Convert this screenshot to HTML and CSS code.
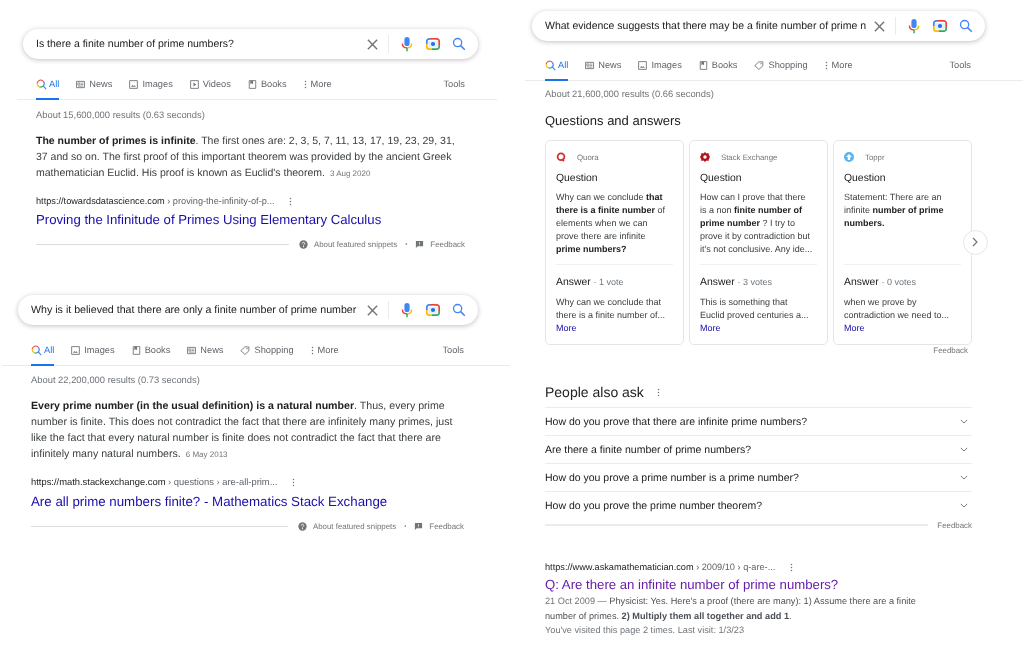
FILE: index.html
```html
<!DOCTYPE html>
<html lang="en">
<head>
    <meta charset="UTF-8">
    <meta name="viewport" content="width=device-width, initial-scale=1.0">
    <title>Prime number searches</title>
    <link rel="stylesheet" href="styles.css">
</head>
<body>
    <!-- shared icons -->
    <svg class="defs" width="0" height="0">
        <symbol id="i-close" viewBox="0 0 14 14"><path d="M2 2l10 10M12 2L2 12" fill="none" stroke="#70757a" stroke-width="1.5"/></symbol>
        <symbol id="i-mic" viewBox="0 0 14 16">
            <rect x="4.4" y="1" width="5.2" height="9" rx="2.6" fill="#4285f4"/>
            <path d="M2.4 7.6c0 2.6 2 4.3 4.6 4.3" fill="none" stroke="#ea4335" stroke-width="1.4"/>
            <path d="M11.6 7.6c0 2.6-2 4.3-4.6 4.3" fill="none" stroke="#fbbc04" stroke-width="1.4"/>
            <path d="M7 11.7V15.2" stroke="#34a853" stroke-width="1.5"/>
        </symbol>
        <symbol id="i-lens" viewBox="0 0 16 16">
            <path d="M1.8 8V5.2a2.4 2.4 0 0 1 2.4-2.4h1.6" fill="none" stroke="#4285f4" stroke-width="1.7"/>
            <path d="M5.4 2.8h5.4" fill="none" stroke="#ea4335" stroke-width="1.7"/>
            <path d="M10.4 2.8h1.4a2.4 2.4 0 0 1 2.4 2.4V9" fill="none" stroke="#ea4335" stroke-width="1.7"/>
            <path d="M1.8 8v2.8a2.4 2.4 0 0 0 2.4 2.4H7" fill="none" stroke="#fbbc04" stroke-width="1.7"/>
            <path d="M7 13.2h4.8a2.4 2.4 0 0 0 2.4-2.4V9" fill="none" stroke="#34a853" stroke-width="1.7"/>
            <path d="M3 5h10v6.8H3z" fill="#d2e3fc" opacity=".55"/>
            <circle cx="8" cy="8" r="2.1" fill="#1a73e8"/>
        </symbol>
        <symbol id="i-search" viewBox="0 0 14 14"><circle cx="5.6" cy="5.6" r="4.1" fill="none" stroke="#4285f4" stroke-width="1.3"/><path d="M8.6 8.6l4.2 4.2" stroke="#4285f4" stroke-width="1.5"/></symbol>
        <symbol id="i-all" viewBox="0 0 12 12">
            <path d="M1.2 5a3.8 3.8 0 0 1 1.6-3" fill="none" stroke="#ea4335" stroke-width="1.2"/>
            <path d="M2.8 2A3.8 3.8 0 0 1 8 2.6" fill="none" stroke="#ea4335" stroke-width="1.2"/>
            <path d="M1.2 5a3.8 3.8 0 0 0 2.4 3.4" fill="none" stroke="#fbbc04" stroke-width="1.2"/>
            <path d="M3.6 8.4A3.8 3.8 0 0 0 8 7.6" fill="none" stroke="#34a853" stroke-width="1.2"/>
            <path d="M8 2.6a3.8 3.8 0 0 1 0 5l3 3.4" fill="none" stroke="#4285f4" stroke-width="1.2"/>
        </symbol>
        <symbol id="i-news" viewBox="0 0 10 10"><path d="M.5 1.5h9v7h-9z" fill="none" stroke="#70757a"/><path d="M2 3.2h2.4v2.2H2zM5.4 3.4h2.8M5.4 5h2.8M2 6.8h6.2" fill="none" stroke="#70757a" stroke-width=".8"/></symbol>
        <symbol id="i-image" viewBox="0 0 10 10"><path d="M.7.7h8.6v8.6H.7z" fill="none" stroke="#70757a"/><path d="M2.2 7.6l1.6-2 1.2 1.2 1-.9 1.8 1.7z" fill="#70757a"/></symbol>
        <symbol id="i-video" viewBox="0 0 10 10"><path d="M.7.7h8.6v8.6H.7z" fill="none" stroke="#70757a"/><path d="M3.8 2.9L7 5 3.8 7.1z" fill="#70757a"/></symbol>
        <symbol id="i-book" viewBox="0 0 10 10"><path d="M1.4.7h7.2v8.6H1.4z" fill="none" stroke="#70757a"/><path d="M2.6.7h3v4l-1.5-1-1.5 1z" fill="#70757a"/></symbol>
        <symbol id="i-tag" viewBox="0 0 11 10"><path d="M.8 5.2L5.2 1h4.6v4.4L5.4 9.4z" fill="none" stroke="#70757a"/><circle cx="7.8" cy="3" r=".7" fill="#70757a"/></symbol>
        <symbol id="i-dots" viewBox="0 0 4 12"><circle cx="2" cy="2" r="1" fill="currentColor"/><circle cx="2" cy="6" r="1" fill="currentColor"/><circle cx="2" cy="10" r="1" fill="currentColor"/></symbol>
        <symbol id="i-help" viewBox="0 0 10 10"><circle cx="5" cy="5" r="4.6" fill="#70757a"/><path d="M3.6 3.9a1.4 1.4 0 1 1 2.1 1.2c-.5.3-.7.5-.7 1" fill="none" stroke="#fff" stroke-width=".9"/><circle cx="5" cy="7.4" r=".6" fill="#fff"/></symbol>
        <symbol id="i-flag" viewBox="0 0 10 10"><path d="M1 1h8v6H3L1 9z" fill="#70757a"/><path d="M5 2.4v2.2M5 5.2v.8" stroke="#fff" stroke-width=".8"/></symbol>
        <symbol id="i-chevron" viewBox="0 0 10 6"><path d="M1 1l4 4 4-4" fill="none" stroke="#70757a" stroke-width="1.2"/></symbol>
    </svg>

    <div class="page">
        <div class="col-left">
            <!-- first search -->
            <section class="panel panel-one">
                <div class="searchbox">
                    <span class="query">Is there a finite number of prime numbers?</span>
                    <svg class="sb-close"><use href="#i-close"/></svg>
                    <span class="sb-line"></span>
                    <svg class="sb-icon sb-mic"><use href="#i-mic"/></svg>
                    <svg class="sb-icon sb-lens"><use href="#i-lens"/></svg>
                    <svg class="sb-icon"><use href="#i-search"/></svg>
                </div>
                <nav class="tabs">
                    <a class="tab active"><svg class="tab-all"><use href="#i-all"/></svg>All</a>
                    <a class="tab"><svg><use href="#i-news"/></svg>News</a>
                    <a class="tab"><svg><use href="#i-image"/></svg>Images</a>
                    <a class="tab"><svg><use href="#i-video"/></svg>Videos</a>
                    <a class="tab"><svg><use href="#i-book"/></svg>Books</a>
                    <a class="tab"><svg class="tab-dots"><use href="#i-dots"/></svg>More</a>
                    <a class="tools">Tools</a>
                </nav>
                <div class="body">
                    <p class="stats">About 15,600,000 results (0.63 seconds)</p>
                    <p class="snippet"><b>The number of primes is infinite</b>. The first ones are: 2, 3, 5, 7, 11, 13, 17, 19, 23, 29, 31,<br>37 and so on. The first proof of this important theorem was provided by the ancient Greek<br>mathematician Euclid. His proof is known as Euclid's theorem. <span class="date">3 Aug 2020</span></p>
                    <div class="cite"><span>https://towardsdatascience.com</span><span class="crumb"> › proving-the-infinity-of-p...</span><svg class="cite-dots"><use href="#i-dots"/></svg></div>
                    <a class="result-title">Proving the Infinitude of Primes Using Elementary Calculus</a>
                    <div class="snippet-foot">
                        <span class="foot-line"></span>
                        <svg><use href="#i-help"/></svg><span>About featured snippets</span>
                        <span class="foot-dot">•</span>
                        <svg><use href="#i-flag"/></svg><span>Feedback</span>
                    </div>
                </div>
            </section>

            <!-- second search -->
            <section class="panel panel-two">
                <div class="searchbox">
                    <span class="query">Why is it believed that there are only a finite number of prime number</span>
                    <svg class="sb-close"><use href="#i-close"/></svg>
                    <span class="sb-line"></span>
                    <svg class="sb-icon sb-mic"><use href="#i-mic"/></svg>
                    <svg class="sb-icon sb-lens"><use href="#i-lens"/></svg>
                    <svg class="sb-icon"><use href="#i-search"/></svg>
                </div>
                <nav class="tabs">
                    <a class="tab active"><svg class="tab-all"><use href="#i-all"/></svg>All</a>
                    <a class="tab"><svg><use href="#i-image"/></svg>Images</a>
                    <a class="tab"><svg><use href="#i-book"/></svg>Books</a>
                    <a class="tab"><svg><use href="#i-news"/></svg>News</a>
                    <a class="tab"><svg class="tab-tag"><use href="#i-tag"/></svg>Shopping</a>
                    <a class="tab"><svg class="tab-dots"><use href="#i-dots"/></svg>More</a>
                    <a class="tools">Tools</a>
                </nav>
                <div class="body">
                    <p class="stats">About 22,200,000 results (0.73 seconds)</p>
                    <p class="snippet"><b>Every prime number (in the usual definition) is a natural number</b>. Thus, every prime<br>number is finite. This does not contradict the fact that there are infinitely many primes, just<br>like the fact that every natural number is finite does not contradict the fact that there are<br>infinitely many natural numbers. <span class="date">6 May 2013</span></p>
                    <div class="cite"><span>https://math.stackexchange.com</span><span class="crumb"> › questions › are-all-prim...</span><svg class="cite-dots"><use href="#i-dots"/></svg></div>
                    <a class="result-title">Are all prime numbers finite? - Mathematics Stack Exchange</a>
                    <div class="snippet-foot">
                        <span class="foot-line"></span>
                        <svg><use href="#i-help"/></svg><span>About featured snippets</span>
                        <span class="foot-dot">•</span>
                        <svg><use href="#i-flag"/></svg><span>Feedback</span>
                    </div>
                </div>
            </section>
        </div>

        <!-- third search -->
        <section class="panel panel-three">
            <div class="searchbox">
                <span class="query">What evidence suggests that there may be a finite number of prime n</span>
                <svg class="sb-close"><use href="#i-close"/></svg>
                <span class="sb-line"></span>
                <svg class="sb-icon sb-mic"><use href="#i-mic"/></svg>
                <svg class="sb-icon sb-lens"><use href="#i-lens"/></svg>
                <svg class="sb-icon"><use href="#i-search"/></svg>
            </div>
            <nav class="tabs">
                <a class="tab active"><svg class="tab-all"><use href="#i-all"/></svg>All</a>
                <a class="tab"><svg><use href="#i-news"/></svg>News</a>
                <a class="tab"><svg><use href="#i-image"/></svg>Images</a>
                <a class="tab"><svg><use href="#i-book"/></svg>Books</a>
                <a class="tab"><svg class="tab-tag"><use href="#i-tag"/></svg>Shopping</a>
                <a class="tab"><svg class="tab-dots"><use href="#i-dots"/></svg>More</a>
                <a class="tools">Tools</a>
            </nav>
            <div class="body">
                <p class="stats">About 21,600,000 results (0.66 seconds)</p>
                <h2 class="qa-title">Questions and answers</h2>
                <div class="cards">
                    <article class="card">
                        <div class="card-source">
                            <svg viewBox="0 0 10 10"><circle cx="5" cy="4.8" r="3.4" fill="none" stroke="#d3302b" stroke-width="1.8"/><path d="M6 7l2 2.2" stroke="#d3302b" stroke-width="1.6"/></svg>
                            <span>Quora</span>
                        </div>
                        <h3>Question</h3>
                        <p class="card-text">Why can we conclude <b>that<br>there is a finite number</b> of<br>elements when we can<br>prove there are infinite<br><b>prime numbers?</b></p>
                        <div class="card-rule"></div>
                        <h3>Answer <span class="votes">· 1 vote</span></h3>
                        <p class="card-text answer">Why can we conclude that<br>there is a finite number of...</p>
                        <a class="more">More</a>
                    </article>
                    <article class="card">
                        <div class="card-source">
                            <svg viewBox="0 0 10 10"><path d="M5 0l1.5 1.4 2-.3.4 2L10 5 8.9 6.9l-.4 2-2-.3L5 10 3.5 8.6l-2 .3-.4-2L0 5l1.1-1.9.4-2 2 .3z" fill="#b3131b"/><circle cx="5" cy="5" r="1.7" fill="#fff"/></svg>
                            <span>Stack Exchange</span>
                        </div>
                        <h3>Question</h3>
                        <p class="card-text">How can I prove that there<br>is a non <b>finite number of<br>prime number</b> ? I try to<br>prove it by contradiction but<br>it's not conclusive. Any ide...</p>
                        <div class="card-rule"></div>
                        <h3>Answer <span class="votes">· 3 votes</span></h3>
                        <p class="card-text answer">This is something that<br>Euclid proved centuries a...</p>
                        <a class="more">More</a>
                    </article>
                    <article class="card">
                        <div class="card-source">
                            <svg viewBox="0 0 10 10"><circle cx="5" cy="5" r="5" fill="#5bb5f0"/><path d="M5 2l3 3H6.2v3H3.8V5H2z" fill="#fff"/></svg>
                            <span>Toppr</span>
                        </div>
                        <h3>Question</h3>
                        <p class="card-text">Statement: There are an<br>infinite <b>number of prime<br>numbers.</b><br>&nbsp;<br>&nbsp;</p>
                        <div class="card-rule"></div>
                        <h3>Answer <span class="votes">· 0 votes</span></h3>
                        <p class="card-text answer">when we prove by<br>contradiction we need to...</p>
                        <a class="more">More</a>
                    </article>
                    <button class="next"><svg viewBox="0 0 6 10"><path d="M1 1l4 4-4 4" fill="none" stroke="#70757a" stroke-width="1.2"/></svg></button>
                </div>
                <div class="qa-feedback">Feedback</div>

                <h2 class="paa-title">People also ask <svg class="paa-dots"><use href="#i-dots"/></svg></h2>
                <div class="paa-row"><span>How do you prove that there are infinite prime numbers?</span><svg><use href="#i-chevron"/></svg></div>
                <div class="paa-row"><span>Are there a finite number of prime numbers?</span><svg><use href="#i-chevron"/></svg></div>
                <div class="paa-row"><span>How do you prove a prime number is a prime number?</span><svg><use href="#i-chevron"/></svg></div>
                <div class="paa-row"><span>How do you prove the prime number theorem?</span><svg><use href="#i-chevron"/></svg></div>
                <div class="paa-foot"><span class="foot-line"></span><span>Feedback</span></div>

                <div class="cite third-cite"><span>https://www.askamathematician.com</span><span class="crumb"> › 2009/10 › q-are-...</span><svg class="cite-dots"><use href="#i-dots"/></svg></div>
                <a class="result-title visited">Q: Are there an infinite number of prime numbers?</a>
                <p class="plain-snippet"><span class="date-plain">21 Oct 2009 — </span>Physicist: Yes. Here's a proof (there are many): 1) Assume there are a finite<br>number of primes. <b>2) Multiply them all together and add 1</b>.</p>
                <p class="visits">You've visited this page 2 times. Last visit: 1/3/23</p>
            </div>
        </section>
    </div>
</body>
</html>
```

FILE: styles.css
```css
body {
    margin: 0;
    background-color: white;
    font-family: "Liberation Sans", Arial, sans-serif;
    color: #202124;
    text-rendering: geometricPrecision;
}
p, h2, h3 {
    margin: 0;
    font-weight: normal;
}
.defs {
    display: block;
    height: 0;
}
.page {
    display: flex;
    height: 645px;
    overflow: hidden;
    filter: blur(0.5px);
}
.col-left {
    width: 525px;
    flex: none;
}
.panel-one {
    margin: 29px 0 0 17px;
    width: 480px;
    --box-left: 6px;
    --box-width: 455px;
    --inset: 19px;
    --tools-right: 32px;
    --tabs-height: 41px;
}
.panel-two {
    margin: 46px 0 0 2px;
    width: 508px;
    --box-left: 16px;
    --box-width: 460px;
    --inset: 29px;
    --tools-right: 46px;
    --tabs-height: 41px;
}
.panel-three {
    margin: 11px 0 0 0;
    width: 498px;
    --box-left: 7px;
    --box-width: 453px;
    --inset: 20px;
    --tools-right: 52px;
    --tabs-height: 40px;
}

/* search box */
.searchbox {
    display: flex;
    align-items: center;
    box-sizing: border-box;
    height: 30px;
    margin-left: var(--box-left);
    width: var(--box-width);
    padding: 0 12px 0 13px;
    border-radius: 15px;
    background-color: white;
    box-shadow: 0 1px 5px rgba(32, 33, 36, 0.28);
}
.query {
    flex: 1;
    min-width: 0;
    white-space: nowrap;
    font-size: 10.5px;
    color: #202124;
}
.panel-two .query {
    font-size: 10.65px;
}
.sb-close {
    width: 13px;
    height: 13px;
    margin-left: 8px;
    flex: none;
}
.sb-line {
    width: 1px;
    height: 18px;
    margin: 0 7px 0 9px;
    background-color: #e9eaec;
    flex: none;
}
.sb-icon {
    width: 14px;
    height: 14px;
    margin-left: 12px;
    flex: none;
}
.sb-icon.sb-mic {
    height: 16px;
    margin-left: 4px;
}
.sb-icon.sb-lens {
    width: 16px;
    height: 16px;
    margin: 0 -1px 0 11px;
}

/* tabs */
.tabs {
    display: flex;
    align-items: flex-end;
    box-sizing: border-box;
    height: var(--tabs-height);
    padding: 0 var(--tools-right) 0 var(--inset);
    gap: 17px;
    border-bottom: 1px solid #ebebeb;
    font-size: 9.25px;
    color: #5f6368;
}
.tab {
    display: flex;
    align-items: center;
    height: 32px;
    margin-bottom: -1px;
    gap: 4px;
}
.tab svg {
    width: 9px;
    height: 9px;
}
.tab .tab-all {
    width: 11px;
    height: 11px;
    margin-right: -2px;
}
.tab .tab-tag {
    width: 10px;
}
.tab .tab-dots {
    width: 3px;
    height: 9px;
    color: #70757a;
}
.tab.active {
    color: #1a73e8;
    box-shadow: inset 0 -2px 0 #1a73e8;
}
.tools {
    display: flex;
    align-items: center;
    height: 32px;
    margin-bottom: -1px;
    margin-left: auto;
}

/* results */
.body {
    padding: 0 var(--inset);
}
.stats {
    margin-top: 8px;
    font-size: 9.4px;
    line-height: 12px;
    color: #70757a;
}
.panel-one .stats {
    margin-top: 9px;
}
.panel-three .stats {
    margin-top: 7px;
}
.snippet {
    margin-top: 12px;
    font-size: 10.52px;
    line-height: 16px;
    color: #3c4043;
}
.panel-two .snippet {
    font-size: 10.62px;
}
.snippet b {
    color: #202124;
}
.date {
    font-size: 8px;
    color: #70757a;
    margin-left: 2px;
}
.cite {
    display: flex;
    align-items: center;
    margin-top: 13px;
    font-size: 9.2px;
    line-height: 12px;
    white-space: pre;
}
.panel-two .cite {
    font-size: 9.4px;
}
.crumb {
    color: #5f6368;
}
.cite-dots {
    width: 3px;
    height: 9px;
    margin-left: 14.5px;
    color: #70757a;
}
.result-title {
    display: block;
    margin-top: 4px;
    font-size: 13.2px;
    line-height: 18px;
    color: #1a0dab;
}
.panel-two .result-title {
    margin-top: 5px;
    font-size: 13.3px;
}
.visited {
    color: #681da8;
}
.snippet-foot {
    display: flex;
    align-items: center;
    gap: 6px;
    margin-top: 11px;
    margin-right: calc(var(--tools-right) - var(--inset));
    font-size: 7.9px;
    color: #70757a;
}
.snippet-foot svg {
    width: 9px;
    height: 9px;
}
.foot-line {
    flex: 1;
    height: 1px;
    margin-right: 4px;
    background-color: #dadce0;
}
.foot-dot {
    margin: 0 2px;
    font-size: 6px;
}

/* questions and answers */
.qa-title {
    margin-top: 12px;
    font-size: 13px;
    line-height: 18px;
}
.cards {
    position: relative;
    display: flex;
    gap: 5px;
    margin-top: 10px;
    width: 427px;
}
.card {
    box-sizing: border-box;
    width: 139px;
    height: 205px;
    padding: 10px;
    border: 1px solid #e4e5e7;
    border-radius: 5px;
}
.card-source {
    display: flex;
    align-items: center;
    gap: 11px;
    height: 12px;
    font-size: 7.8px;
    color: #70757a;
}
.card-source svg {
    width: 10px;
    height: 10px;
}
.card h3 {
    margin-top: 9px;
    font-size: 10.4px;
    line-height: 14px;
    color: #202124;
}
.card-text {
    margin-top: 5px;
    font-size: 9px;
    line-height: 13px;
    color: #3c4043;
    white-space: nowrap;
}
.card-text b {
    color: #202124;
}
.card-text.answer {
    margin-top: 6px;
}
.card-rule {
    height: 1px;
    margin-top: 8px;
    background-color: #f0f0f0;
}
.card .card-rule + h3 {
    margin-top: 10px;
}
.votes {
    font-size: 9px;
    color: #70757a;
}
.more {
    display: block;
    font-size: 9px;
    line-height: 13px;
    color: #1a0dab;
}
.next {
    position: absolute;
    left: 417.5px;
    top: 89.5px;
    width: 25px;
    height: 25px;
    padding: 0;
    border: 1px solid #e4e5e7;
    border-radius: 50%;
    background-color: white;
}
.next svg {
    display: block;
    width: 6px;
    height: 10px;
    margin: 0 auto;
}
.qa-feedback {
    width: 423px;
    margin-top: 1px;
    font-size: 7.9px;
    line-height: 10px;
    text-align: right;
    color: #70757a;
}

/* people also ask */
.paa-title {
    display: flex;
    align-items: center;
    margin-top: 27px;
    margin-bottom: 6px;
    font-size: 14px;
    line-height: 18px;
}
.paa-dots {
    width: 3px;
    height: 9px;
    margin-left: 13px;
    color: #70757a;
}
.paa-row {
    display: flex;
    align-items: center;
    justify-content: space-between;
    box-sizing: border-box;
    width: 427px;
    height: 28px;
    padding-right: 4px;
    font-size: 10.5px;
    border-top: 1px solid #ebebeb;
}
.paa-row svg {
    width: 8px;
    height: 5px;
}
.paa-foot {
    display: flex;
    align-items: center;
    width: 427px;
    margin-top: 1.5px;
    font-size: 7.9px;
    color: #70757a;
}
.paa-foot .foot-line {
    height: 2px;
    margin-right: 9px;
    background-color: #ebebeb;
}
.third-cite {
    margin-top: 31.5px;
}
.third-cite + .result-title {
    margin-top: 3px;
}
.plain-snippet {
    font-size: 9.2px;
    line-height: 14.6px;
    color: #4d5156;
    white-space: nowrap;
}
.date-plain, .visits {
    color: #70757a;
}
.visits {
    font-size: 9.2px;
    line-height: 14px;
}
```
